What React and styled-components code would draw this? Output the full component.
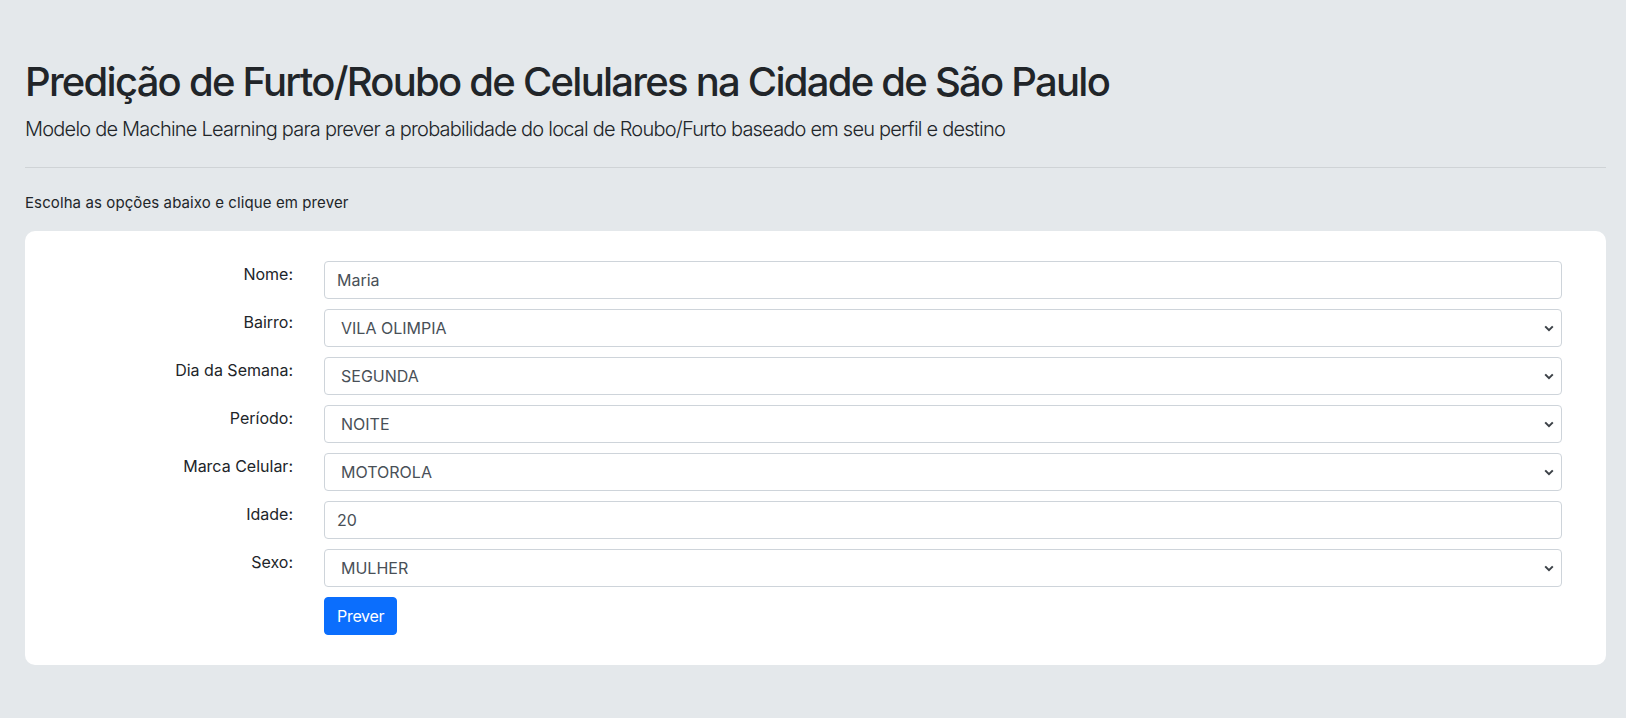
import styled, { createGlobalStyle } from "styled-components";

const GlobalStyle = createGlobalStyle`
  html, body {
    margin: 0;
    padding: 0;
    background: #e4e8eb;
  }
  body {
    font-family: Inter, "Noto Sans", "Liberation Sans", sans-serif;
    font-size: 16px;
    line-height: 1.5;
    color: #212529;
  }
  * {
    box-sizing: border-box;
  }
`;

const Page = styled.div`
  min-height: 718px;
  padding: 58px 20px 52px 25px;
`;

const Title = styled.h1`
  margin: 0 0 8px;
  font-size: 40px;
  line-height: 1.2;
  font-weight: 500;
  letter-spacing: -1.75px;
`;

const Lead = styled.p`
  margin: 0;
  font-size: 20px;
  line-height: 1.5;
  font-weight: 300;
  letter-spacing: -0.78px;
`;

const Divider = styled.hr`
  margin: 23px 0 24px;
  border: 0;
  border-top: 1px solid #cfd3d6;
`;

const Hint = styled.p`
  margin: 0 0 16px;
  font-size: 15px;
  letter-spacing: 0.1px;
`;

const Card = styled.div`
  background: #fff;
  border-radius: 10px;
  padding: 30px 44px 30px 44px;
`;

const Form = styled.form`
  display: grid;
  grid-template-columns: 224px 1fr;
  column-gap: 31px;
  row-gap: 10px;
`;

const Label = styled.label`
  text-align: right;
  padding-top: 1px;
  font-size: 16px;
  line-height: 24px;
`;

const fieldBase = `
  width: 100%;
  height: 38px;
  border: 1px solid #ced4da;
  border-radius: 4px;
  background: #fff;
  font-family: Inter, "Noto Sans", "Liberation Sans", sans-serif;
  font-size: 16px;
  line-height: 24px;
  color: #495057;
  outline: none;
`;

const TextInput = styled.input`
  ${fieldBase}
  padding: 6px 12px;
`;

const SelectWrap = styled.div`
  position: relative;
`;

const Select = styled.select`
  ${fieldBase}
  padding: 6px 30px 6px 16px;
  appearance: none;
  -webkit-appearance: none;
`;

const Chevron = styled.svg`
  position: absolute;
  right: 8px;
  top: 16px;
  pointer-events: none;
`;

const Actions = styled.div`
  grid-column: 2;
`;

const Button = styled.button`
  height: 38px;
  padding: 6px 12px;
  border: 1px solid #0b6efd;
  border-radius: 4px;
  background: #0b6efd;
  color: #fff;
  font-family: Inter, "Noto Sans", "Liberation Sans", sans-serif;
  font-size: 16px;
  line-height: 24px;
  letter-spacing: -0.3px;
  cursor: pointer;
`;

const fields = [
  { id: "nome", label: "Nome:", type: "text", value: "Maria" },
  { id: "bairro", label: "Bairro:", options: ["VILA OLIMPIA", "PINHEIROS", "MOEMA", "SE"] },
  { id: "dia", label: "Dia da Semana:", options: ["SEGUNDA", "TERCA", "QUARTA", "QUINTA", "SEXTA", "SABADO", "DOMINGO"] },
  { id: "periodo", label: "Período:", options: ["NOITE", "MANHA", "TARDE", "MADRUGADA"] },
  { id: "marca", label: "Marca Celular:", options: ["MOTOROLA", "SAMSUNG", "APPLE", "XIAOMI"] },
  { id: "idade", label: "Idade:", type: "text", value: "20" },
  { id: "sexo", label: "Sexo:", options: ["MULHER", "HOMEM"] },
];

const Field = ({ field }) => {
  if (field.options) {
    return (
      <SelectWrap>
        <Select id={field.id} defaultValue={field.options[0]}>
          {field.options.map((o) => (
            <option key={o}>{o}</option>
          ))}
        </Select>
        <Chevron width="10" height="7" viewBox="0 0 10 7">
          <path d="M1.2 1.4 5 5.2 8.8 1.4" fill="none" stroke="#3c4147" strokeWidth="2" />
        </Chevron>
      </SelectWrap>
    );
  }
  return <TextInput id={field.id} type={field.type} defaultValue={field.value} />;
};

export default function App() {
  return (
    <Page>
      <GlobalStyle />
      <Title>Predição de Furto/Roubo de Celulares na Cidade de São Paulo</Title>
      <Lead>Modelo de Machine Learning para prever a probabilidade do local de Roubo/Furto baseado em seu perfil e destino</Lead>
      <Divider />
      <Hint>Escolha as opções abaixo e clique em prever</Hint>
      <Card>
        <Form onSubmit={(e) => e.preventDefault()}>
          {fields.map((f) => (
            <>
              <Label key={f.id + "-l"} htmlFor={f.id}>{f.label}</Label>
              <Field key={f.id} field={f} />
            </>
          ))}
          <Actions>
            <Button type="submit">Prever</Button>
          </Actions>
        </Form>
      </Card>
    </Page>
  );
}
